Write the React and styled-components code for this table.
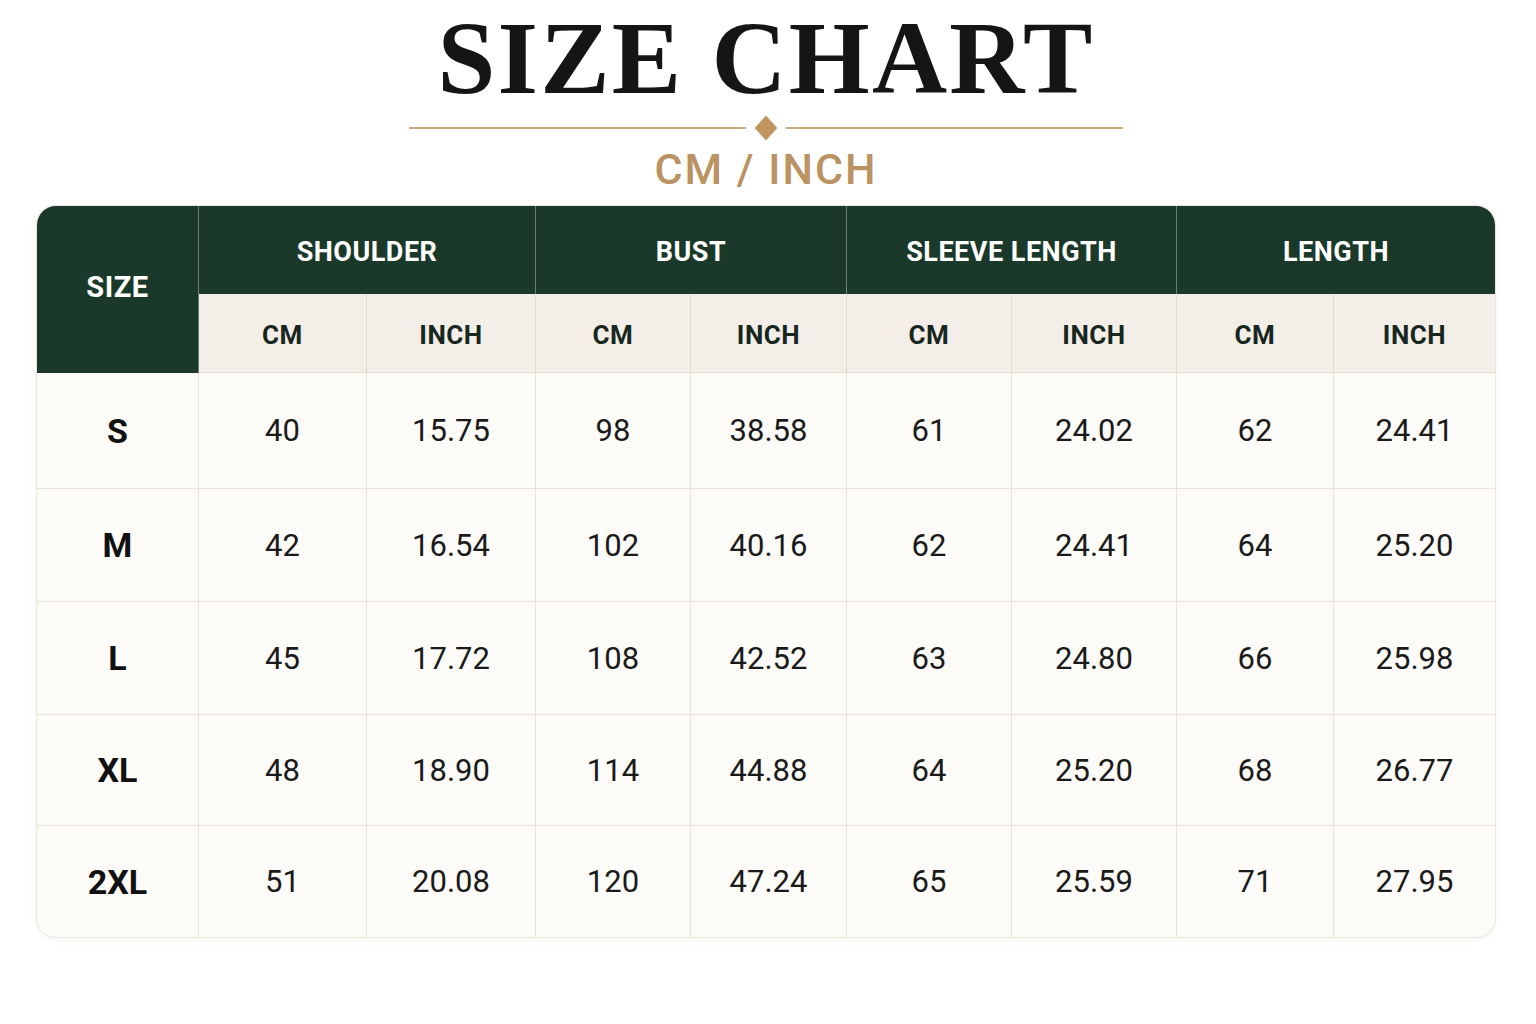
import React from 'react';
import styled, { createGlobalStyle } from 'styled-components';

const GlobalStyle = createGlobalStyle`
  html, body {
    margin: 0;
    padding: 0;
    background: #ffffff;
  }
  body {
    font-family: 'Roboto', 'Liberation Sans', sans-serif;
  }
`;

const Page = styled.div`
  width: 1536px;
  min-height: 1024px;
  box-sizing: border-box;
  padding-right: 4px;
  display: flex;
  flex-direction: column;
  align-items: center;
`;

const Title = styled.h1`
  margin: 6px 0 0;
  font-family: 'Liberation Serif', 'Times New Roman', serif;
  font-weight: 700;
  font-size: 104px;
  line-height: 1;
  letter-spacing: 2.2px;
  color: #151515;
`;

const Divider = styled.div`
  margin-top: 6px;
  width: 714px;
  height: 24px;
  display: flex;
  align-items: center;
  gap: 12px;
`;

const Rule = styled.div`
  flex: 1;
  height: 2px;
  background: #c9a977;
`;

const Diamond = styled.div`
  width: 16px;
  height: 16px;
  background: #bf9660;
  transform: scaleY(1.1) rotate(45deg);
`;

const Units = styled.div`
  margin-top: 8px;
  font-family: 'Roboto', 'Liberation Sans', sans-serif;
  font-weight: 500;
  font-size: 43px;
  line-height: 1;
  letter-spacing: 2px;
  color: #bb9261;
`;

const Table = styled.div`
  margin-top: 14px;
  display: grid;
  grid-template-columns: 162px 168px 169px 155px 156px 165px 165px 157px 161px;
  grid-template-rows: 88px 79px 116px 113px 113px 111px 111px;
  border: 1px solid #ebe5da;
  border-radius: 20px;
  overflow: hidden;
  background: #fcfbf8;
  box-shadow: 0 2px 6px rgba(60, 50, 30, 0.05);
`;

const Cell = styled.div`
  display: flex;
  align-items: center;
  justify-content: center;
  box-sizing: border-box;
  border-right: ${p => (p.$last ? 'none' : '1px solid #e9e2d6')};
  border-bottom: ${p => (p.$bottom ? 'none' : '1px solid #e9e2d6')};
`;

const SizeHead = styled(Cell)`
  grid-row: span 2;
  padding-bottom: 6px;
  background: #1b392a;
  color: #ffffff;
  font-weight: 700;
  font-size: 29px;
  letter-spacing: 0.5px;
  border-right: 1px solid rgba(255, 255, 255, 0.35);
  border-bottom: none;
`;

const GroupHead = styled(Cell)`
  grid-column: span 2;
  padding-top: 4px;
  background: #1b392a;
  color: #ffffff;
  font-weight: 700;
  font-size: 27px;
  letter-spacing: 0.5px;
  border-right: ${p => (p.$last ? 'none' : '1px solid rgba(255, 255, 255, 0.35)')};
  border-bottom: none;
`;

const UnitHead = styled(Cell)`
  padding-top: 4px;
  background: #f3efe8;
  color: #17261e;
  font-weight: 700;
  font-size: 26px;
  letter-spacing: 0.5px;
  border-color: #e3dbce;
`;

const SizeCell = styled(Cell)`
  color: #111111;
  font-weight: 700;
  font-size: 34px;
`;

const ValueCell = styled(Cell)`
  color: #1a1a1a;
  font-weight: 400;
  font-size: 31px;
`;

const groups = ['SHOULDER', 'BUST', 'SLEEVE LENGTH', 'LENGTH'];

const rows = [
  ['S', '40', '15.75', '98', '38.58', '61', '24.02', '62', '24.41'],
  ['M', '42', '16.54', '102', '40.16', '62', '24.41', '64', '25.20'],
  ['L', '45', '17.72', '108', '42.52', '63', '24.80', '66', '25.98'],
  ['XL', '48', '18.90', '114', '44.88', '64', '25.20', '68', '26.77'],
  ['2XL', '51', '20.08', '120', '47.24', '65', '25.59', '71', '27.95'],
];

export default function App() {
  return (
    <Page>
      <GlobalStyle />
      <Title>SIZE CHART</Title>
      <Divider>
        <Rule />
        <Diamond />
        <Rule />
      </Divider>
      <Units>CM / INCH</Units>
      <Table>
        <SizeHead>SIZE</SizeHead>
        {groups.map((g, i) => (
          <GroupHead key={g} $last={i === groups.length - 1}>{g}</GroupHead>
        ))}
        {groups.map((g, i) => (
          <React.Fragment key={g}>
            <UnitHead>CM</UnitHead>
            <UnitHead $last={i === groups.length - 1}>INCH</UnitHead>
          </React.Fragment>
        ))}
        {rows.map((r, ri) => {
          const bottom = ri === rows.length - 1;
          return (
            <React.Fragment key={r[0]}>
              <SizeCell $bottom={bottom}>{r[0]}</SizeCell>
              {r.slice(1).map((v, ci) => (
                <ValueCell key={ci} $bottom={bottom} $last={ci === r.length - 2}>
                  {v}
                </ValueCell>
              ))}
            </React.Fragment>
          );
        })}
      </Table>
    </Page>
  );
}
